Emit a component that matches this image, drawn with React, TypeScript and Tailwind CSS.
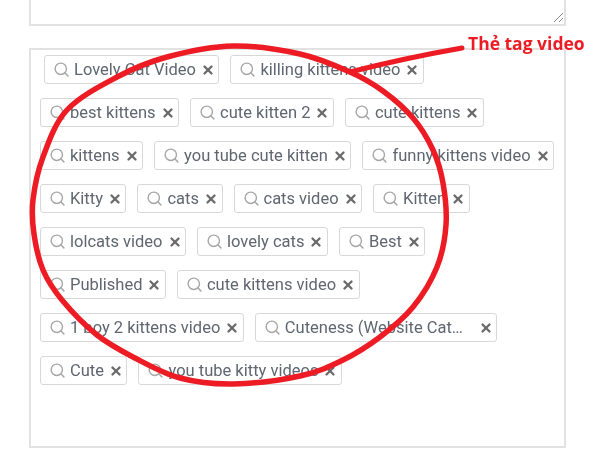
import { Search, X } from 'lucide-react'

const ROWS: { label: string; className?: string; xClass?: string }[][] = [
  [{ label: 'Lovely Cat Video', className: 'ml-1' }, { label: 'killing kittens video' }],
  [{ label: 'best kittens' }, { label: 'cute kitten 2' }, { label: 'cute kittens' }],
  [{ label: 'kittens' }, { label: 'you tube cute kitten' }, { label: 'funny kittens video' }],
  [{ label: 'Kitty' }, { label: 'cats' }, { label: 'cats video' }, { label: 'Kitten' }],
  [{ label: 'lolcats video' }, { label: 'lovely cats' }, { label: 'Best' }],
  [{ label: 'Published' }, { label: 'cute kittens video' }],
  [{ label: '1 boy 2 kittens video' }, { label: 'Cuteness (Website Cat…', xClass: 'ml-[11px]' }],
  [{ label: 'Cute' }, { label: 'you tube kitty videos' }],
]

// traced from the hand-drawn ring, clockwise from the top
const RING: [number, number][] = [
  [233, 46], [300, 54], [350, 72], [383, 91], [413, 118], [433, 150], [443, 183], [446, 225],
  [437, 267], [413, 307], [380, 337], [343, 360], [300, 376], [233, 384], [180, 378], [135, 358],
  [97, 335], [62, 300], [43, 270], [34, 234], [33, 200], [43, 157], [67, 110], [117, 77], [167, 57],
]

function smoothRing(pts: [number, number][]) {
  const n = pts.length
  let d = `M${pts[0][0]} ${pts[0][1]}`
  for (let i = 0; i < n; i++) {
    const [p0, p1, p2, p3] = [pts[(i - 1 + n) % n], pts[i], pts[(i + 1) % n], pts[(i + 2) % n]]
    const c1 = [p1[0] + (p2[0] - p0[0]) / 6, p1[1] + (p2[1] - p0[1]) / 6]
    const c2 = [p2[0] - (p3[0] - p1[0]) / 6, p2[1] - (p3[1] - p1[1]) / 6]
    d += ` C${c1[0]} ${c1[1]} ${c2[0]} ${c2[1]} ${p2[0]} ${p2[1]}`
  }
  return d + ' Z'
}

function Tag({ label, className = '', xClass = '' }: { label: string; className?: string; xClass?: string }) {
  return (
    <div className={`flex h-[29px] items-center gap-[5px] rounded-[3px] border border-[#d8d8d8] bg-white pl-[8px] pr-[3.5px] ${className}`}>
      <Search size={17} strokeWidth={2} className="mr-[-1px] shrink-0 text-[#a6a6a6]" />
      <span className="whitespace-nowrap pt-[1px] text-[16.5px] text-[#5f6670]">{label}</span>
      <X size={14} strokeWidth={4} className={`shrink-0 text-[#6b6b6b] ${xClass}`} />
    </div>
  )
}

export default function App() {
  return (
    <div className="relative h-[457px] w-[600px] overflow-hidden bg-white font-['Roboto',sans-serif] blur-[0.5px]">
      <div className="ml-[29px] w-[537px]">
        <div className="relative -mt-[2px] h-[28px] border-2 border-t-0 border-[#e2e2e2]">
          <svg className="absolute bottom-[1px] right-0" width="11" height="11" viewBox="0 0 11 11">
            <path d="M1 10 L10 1 M6 10 L10 6" stroke="#8a8a8a" strokeWidth="1" />
          </svg>
        </div>
        <div className="mt-[22px] flex h-[400px] flex-col gap-[14px] border-2 border-[#e2e2e2] pl-[9px] pt-[5px]">
          {ROWS.map((row, i) => (
            <div key={i} className="flex gap-[11px]">
              {row.map(tag => (
                <Tag key={tag.label} label={tag.label} className={tag.className} xClass={tag.xClass} />
              ))}
            </div>
          ))}
        </div>
      </div>

      {/* red annotation drawn over the tags */}
      <svg className="absolute inset-0" width="600" height="457" viewBox="0 0 600 457" fill="none">
        <path d="M350 72 Q405 58 462 48" stroke="#ed1c24" strokeWidth="5" strokeLinecap="round" />
        <path d={smoothRing(RING)} stroke="#ed1c24" strokeWidth="5.5" />
      </svg>
      <span className="absolute left-[468px] top-[30px] whitespace-nowrap font-['Open_Sans',sans-serif] text-[17.5px] font-bold text-[#ed1c24]">
        Thẻ tag video
      </span>
    </div>
  )
}
